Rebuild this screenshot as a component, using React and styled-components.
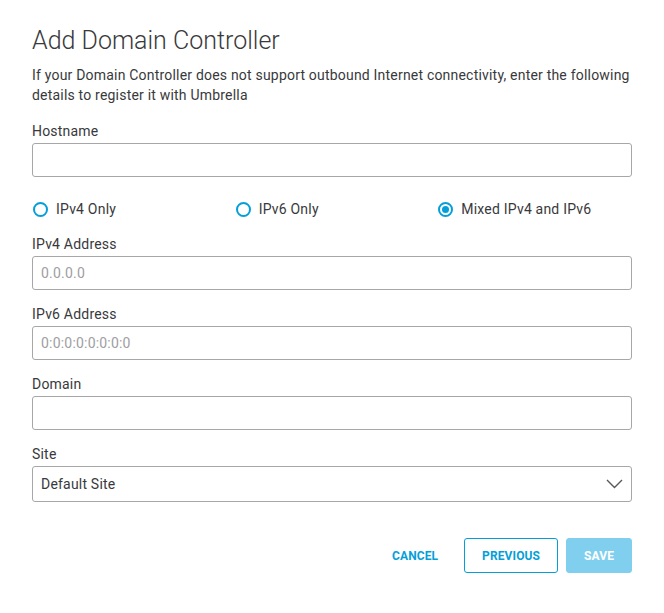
import React, { useState } from "react"
import styled, { createGlobalStyle } from "styled-components"

const GlobalStyle = createGlobalStyle`
  body {
    margin: 0;
    background: #ffffff;
    font-family: Roboto, "Liberation Sans", Arial, sans-serif;
    color: #39393b;
    letter-spacing: 0.2px;
  }
`

const Page = styled.div`
  width: 664px;
  padding: 26px 32px 0;
  box-sizing: border-box;
`

const Title = styled.h1`
  margin: 0;
  font-size: 25px;
  font-weight: 300;
  line-height: 30px;
  letter-spacing: 0;
  color: #39393b;
`

const Description = styled.p`
  margin: 9px 0 0;
  font-size: 14px;
  line-height: 20px;
  font-weight: 400;
  color: #39393b;
`

const Field = styled.div`
  display: flex;
  flex-direction: column;
  margin-top: ${({ $top = 14 }) => $top}px;
`

const Label = styled.label`
  font-size: 14px;
  line-height: 20px;
  margin-bottom: 2px;
  color: #39393b;
`

const Input = styled.input`
  box-sizing: border-box;
  width: 100%;
  height: 34px;
  padding: 0 8px;
  border: 1px solid #a7a7a7;
  border-radius: 3px;
  font-family: inherit;
  font-size: 14px;
  letter-spacing: 0.2px;
  color: #39393b;
  outline: none;

  &::placeholder {
    color: #9e9ea2;
  }
`

const SelectBox = styled.div`
  box-sizing: border-box;
  height: 36px;
  padding: 0 8px;
  border: 1px solid #a7a7a7;
  border-radius: 3px;
  display: flex;
  align-items: center;
  justify-content: space-between;
  font-size: 14px;
  color: #39393b;
`

const RadioRow = styled.div`
  display: grid;
  grid-template-columns: repeat(3, 1fr);
  column-gap: 8px;
  margin-top: 22px;
`

const RadioItem = styled.div`
  display: flex;
  align-items: center;
  gap: 8px;
  font-size: 14px;
  line-height: 20px;
  cursor: pointer;
`

const RadioCircle = styled.span`
  box-sizing: border-box;
  width: 15px;
  height: 15px;
  margin-left: 1px;
  border-radius: 50%;
  border: 2px solid #049fd9;
  display: flex;
  align-items: center;
  justify-content: center;

  &::after {
    content: "";
    width: 7px;
    height: 7px;
    border-radius: 50%;
    background: ${({ $checked }) => ($checked ? "#049fd9" : "transparent")};
  }
`

const Footer = styled.div`
  display: flex;
  justify-content: flex-end;
  align-items: center;
  gap: 8px;
  margin-top: 36px;
`

const Button = styled.button`
  box-sizing: border-box;
  height: 35px;
  padding: 0 17px;
  border-radius: 3px;
  font-family: inherit;
  font-size: 12px;
  font-weight: 700;
  letter-spacing: 0.1px;
  cursor: pointer;
  border: 1px solid
    ${({ $variant }) =>
      $variant === "outline" ? "#049fd9" : $variant === "primary" ? "#80cfee" : "transparent"};
  background: ${({ $variant }) => ($variant === "primary" ? "#80cfee" : "#ffffff")};
  color: ${({ $variant }) => ($variant === "primary" ? "#ffffff" : "#049fd9")};
`

const Chevron = () => (
  <svg width="17" height="10" viewBox="0 0 17 10" fill="none">
    <path d="M1 1l7.5 7.5L16 1" stroke="#58585b" strokeWidth="1.4" />
  </svg>
)

const modes = ["IPv4 Only", "IPv6 Only", "Mixed IPv4 and IPv6"]

const App = () => {
  const [mode, setMode] = useState(2)

  return (
    <Page>
      <GlobalStyle />
      <Title>Add Domain Controller</Title>
      <Description>
        If your Domain Controller does not support outbound Internet connectivity, enter the following
        details to register it with Umbrella
      </Description>

      <Field $top={16}>
        <Label>Hostname</Label>
        <Input />
      </Field>

      <RadioRow>
        {modes.map((m, i) => (
          <RadioItem key={m} onClick={() => setMode(i)}>
            <RadioCircle $checked={mode === i} />
            {m}
          </RadioItem>
        ))}
      </RadioRow>

      <Field $top={15}>
        <Label>IPv4 Address</Label>
        <Input placeholder="0.0.0.0" />
      </Field>

      <Field $top={14}>
        <Label>IPv6 Address</Label>
        <Input placeholder="0:0:0:0:0:0:0:0" />
      </Field>

      <Field $top={14}>
        <Label>Domain</Label>
        <Input />
      </Field>

      <Field $top={14}>
        <Label>Site</Label>
        <SelectBox>
          Default Site
          <Chevron />
        </SelectBox>
      </Field>

      <Footer>
        <Button>CANCEL</Button>
        <Button $variant="outline">PREVIOUS</Button>
        <Button $variant="primary">SAVE</Button>
      </Footer>
    </Page>
  )
}

export default App
